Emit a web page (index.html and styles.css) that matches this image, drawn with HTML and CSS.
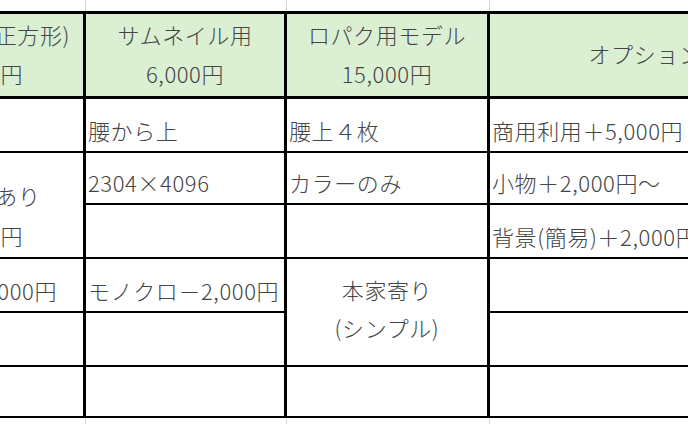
FILE: index.html
```html
<!DOCTYPE html>
<html lang="ja">
<head>
<meta charset="utf-8">
<link rel="stylesheet" href="styles.css">
</head>
<body>
<div class="sheet-wrap">
  <div class="stub"><span></span><span></span><span></span><span></span></div>
  <div class="sheet">
    <div class="cell head"><span>アイコン(正方形)</span><span>3,000円</span></div>
    <div class="cell head"><span>サムネイル用</span><span>6,000円</span></div>
    <div class="cell head"><span>ロパク用モデル</span><span>15,000円</span></div>
    <div class="cell head"><span>オプション</span></div>

    <div class="cell"></div>
    <div class="cell">腰から上</div>
    <div class="cell">腰上４枚</div>
    <div class="cell">商用利用＋5,000円</div>

    <div class="cell merged-a"><span>立ち絵あり</span><span>3,000円</span></div>
    <div class="cell">2304×4096</div>
    <div class="cell">カラーのみ</div>
    <div class="cell">小物＋2,000円～</div>

    <div class="cell"></div>
    <div class="cell"></div>
    <div class="cell">背景(簡易)＋2,000円</div>

    <div class="cell center">差分＋2,000円</div>
    <div class="cell">モノクロ－2,000円</div>
    <div class="cell merged-c"><span>本家寄り</span><span>(シンプル)</span></div>
    <div class="cell"></div>

    <div class="cell"></div>
    <div class="cell"></div>
    <div class="cell"></div>

    <div class="cell"></div>
    <div class="cell"></div>
    <div class="cell"></div>
    <div class="cell"></div>
  </div>
  <div class="stub"><span></span><span></span><span></span><span></span></div>
</div>
</body>
</html>
```

FILE: styles.css
```css
html, body {
  margin: 0;
  padding: 0;
  background: #fff;
  overflow: hidden;
}

body {
  width: 688px;
  height: 424px;
  font-family: "Noto Sans CJK JP", "Noto Sans", sans-serif;
  font-size: 22px;
  font-weight: 300;
  letter-spacing: 0.6px;
  color: #454545;
}

.sheet-wrap {
  margin-left: -115px;
  width: 915px;
}

.stub {
  display: grid;
  grid-template-columns: 201px 201px 203px 310px;
  height: 11px;
}

.stub:last-child {
  height: 8px;
}

.stub span {
  border-right: 1px solid #d6d6d6;
}

.stub span:last-child {
  border-right: none;
}

.sheet {
  display: grid;
  grid-template-columns: 198px 198px 200px 310px;
  grid-template-rows: 83px 52px 50px 52px 52px 52px 49px;
  column-gap: 3px;
  row-gap: 2px;
  background: #000;
  border-top: 3px solid #000;
  border-bottom: 2px solid #000;
}

.cell {
  background: #fff;
  display: flex;
  align-items: flex-end;
  padding: 0 0 9px 2px;
  line-height: 24px;
  white-space: nowrap;
  overflow: hidden;
}

.cell.head {
  background: #dbefd3;
  border-bottom: 1px solid #000;
  flex-direction: column;
  align-items: center;
  justify-content: center;
  padding: 0 0 3px 0;
  line-height: 39px;
}

.cell.center {
  justify-content: center;
  padding-left: 0;
}

.merged-a {
  grid-row: span 2;
  flex-direction: column;
  align-items: center;
  justify-content: flex-end;
  padding: 0 0 2px 0;
  line-height: 40px;
}

.merged-c {
  grid-row: span 2;
  flex-direction: column;
  align-items: center;
  justify-content: center;
  padding: 0 0 9px 0;
  line-height: 38px;
}
```
